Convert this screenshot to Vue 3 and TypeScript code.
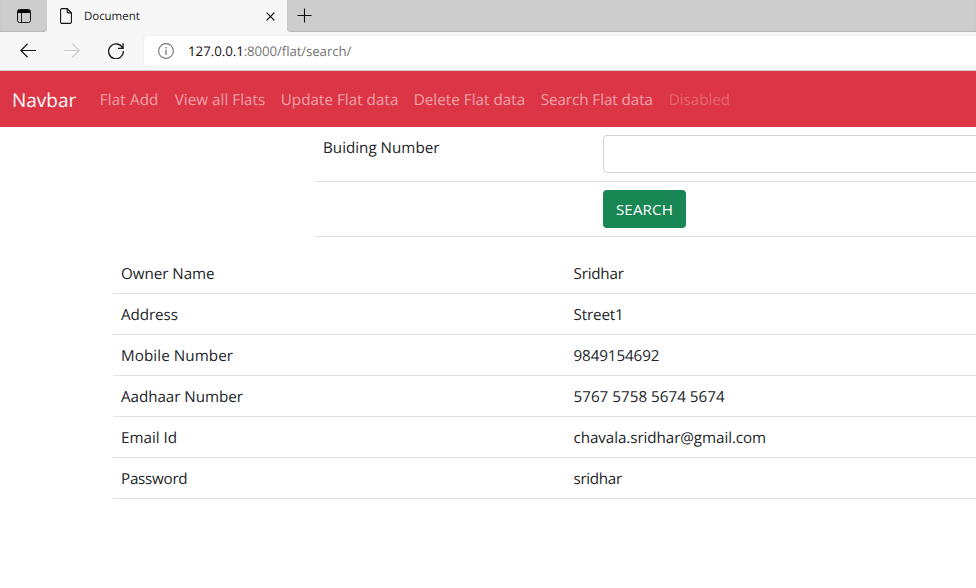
<script setup lang="ts">
interface Label { text: string; tracking: number }
interface Row { label: Label; value: Label }

const links: Label[] = [
  { text: 'Flat Add', tracking: 0.15 },
  { text: 'View all Flats', tracking: 0.05 },
  { text: 'Update Flat data', tracking: 0.04 },
  { text: 'Delete Flat data', tracking: 0.04 },
  { text: 'Search Flat data', tracking: -0.05 },
  { text: 'Disabled', tracking: 0 },
]

const rows: Row[] = [
  { label: { text: 'Owner Name', tracking: -0.05 }, value: { text: 'Sridhar', tracking: -0.2 } },
  { label: { text: 'Address', tracking: -0.08 }, value: { text: 'Street1', tracking: -0.15 } },
  { label: { text: 'Mobile Number', tracking: 0.08 }, value: { text: '9849154692', tracking: -0.1 } },
  { label: { text: 'Aadhaar Number', tracking: -0.05 }, value: { text: '5767 5758 5674 5674', tracking: 0.02 } },
  { label: { text: 'Email Id', tracking: 0 }, value: { text: 'chavala.sridhar@gmail.com', tracking: -0.07 } },
  { label: { text: 'Password', tracking: -0.26 }, value: { text: 'sridhar', tracking: -0.32 } },
]

const spacing = (l: Label) => ({ letterSpacing: `${l.tracking}px` })
</script>

<template>
  <div class="window">
    <div class="tabstrip">
      <div class="strip-left">
        <svg class="tab-actions" width="14" height="14" viewBox="0 0 14 14">
          <rect x=".5" y=".5" width="13" height="13" rx="2" fill="none" stroke="#111" />
          <path d="M1 1h12v3H1z" fill="#000" />
          <path d="M4.5 4v9" stroke="#222" fill="none" />
        </svg>
      </div>
      <div class="tab">
        <svg width="12" height="16" viewBox="0 0 12 16" fill="none" stroke="#111" stroke-width="1.1">
          <path d="M2 .6h5.2l4.2 4.2V14a1.4 1.4 0 0 1-1.4 1.4H2A1.4 1.4 0 0 1 .6 14V2A1.4 1.4 0 0 1 2 .6z" />
          <path d="M7.2.8V4a.9.9 0 0 0 .9.9h3.2" />
        </svg>
        <span class="tab-title">Document</span>
        <svg class="close" width="9" height="9" viewBox="0 0 9 9" stroke="#111" stroke-width="1.3">
          <path d="M.6.6l7.8 7.8M8.4.6L.6 8.4" />
        </svg>
      </div>
      <div class="strip-right">
        <svg width="15" height="15" viewBox="0 0 15 15" stroke="#111" stroke-width="1.1">
          <path d="M7.5.5v14M.5 7.5h14" />
        </svg>
      </div>
    </div>

    <div class="toolbar">
      <div class="controls">
        <svg width="16" height="16" viewBox="0 0 16 16" fill="none" stroke="#1a1a1a" stroke-width="1.2">
          <path d="M16 7.5H.8M7.6.8L.8 7.5l6.8 6.7" />
        </svg>
        <svg width="16" height="16" viewBox="0 0 16 16" fill="none" stroke="#cbcbcb" stroke-width="1.2">
          <path d="M0 7.5h15.2M8.4.8l6.8 6.7-6.8 6.7" />
        </svg>
        <svg width="16" height="16" viewBox="0 0 16 16" fill="none" stroke="#1a1a1a" stroke-width="1.3">
          <path d="M14.6 5A7.4 7.4 0 1 0 15.4 8M15.1.2v5.1H10" />
        </svg>
      </div>
      <div class="address">
        <svg width="16" height="16" viewBox="0 0 16 16" fill="none" stroke="#767676">
          <circle cx="8" cy="8" r="7.4" stroke-width="1.1" />
          <path d="M8 6.8v5M8 4v1.5" stroke-width="1.3" />
        </svg>
        <span class="url"><span class="host">127.0.0.1</span>:8000/flat/search/</span>
      </div>
    </div>

    <nav class="navbar">
      <a class="brand">Navbar</a>
      <div class="links">
        <a v-for="link in links" :key="link.text" class="link" :class="{ disabled: link.text === 'Disabled' }" :style="spacing(link)">{{ link.text }}</a>
      </div>
    </nav>

    <form class="search" @submit.prevent>
      <div class="search-row">
        <label class="caption" for="building">Buiding Number</label>
        <input id="building" class="control" type="text" />
      </div>
      <div class="search-row">
        <span></span>
        <button class="submit" type="submit">SEARCH</button>
      </div>
    </form>

    <div class="details">
      <div v-for="row in rows" :key="row.label.text" class="detail">
        <span :style="spacing(row.label)">{{ row.label.text }}</span>
        <span :style="spacing(row.value)">{{ row.value.text }}</span>
      </div>
    </div>
  </div>
</template>

<style>
body {
  margin: 0;
  background: #fff;
}
</style>

<style scoped>
.window {
  width: 976px;
  height: 588px;
  overflow: hidden;
  background: #fff;
  color: #212529;
  font: 15.2px/24px "Open Sans", "Noto Sans", sans-serif;
  text-rendering: geometricPrecision;
}
.window * {
  box-sizing: border-box;
}
svg {
  display: block;
  flex: none;
}
.tabstrip {
  display: flex;
  height: 32px;
  background: #f7f7f7;
}
.strip-left,
.strip-right {
  background: #cdcdcd;
  box-shadow: inset 0 -1px 1px #bababa;
}
.strip-left {
  width: 47px;
  padding: 9px 0 0 17px;
  border-bottom-right-radius: 4px;
}
.strip-right {
  flex: 1;
  padding: 8px 0 0 10px;
  border-bottom-left-radius: 4px;
}
.tab {
  display: flex;
  width: 240px;
  padding: 8px 12px 0 13px;
  font-size: 11.5px;
  line-height: 16px;
  color: #1b1b1b;
  background: #f7f7f7;
}
.tab-title {
  flex: 1;
  padding: 1px 0 0 12px;
  letter-spacing: -0.05px;
}
.close {
  margin-top: 4px;
}
.toolbar {
  display: flex;
  height: 39px;
  padding-top: 4px;
  background: #f7f7f7;
  border-bottom: 1px solid #cbcbcb;
}
.controls {
  display: flex;
  gap: 28px;
  width: 144px;
  padding: 7px 0 0 20px;
}
.address {
  display: flex;
  flex: 1;
  gap: 14px;
  height: 30px;
  padding: 7px 0 0 14px;
  background: #fff;
  border-radius: 4px 0 0 4px;
  box-shadow: 0 0 3px #e6e6e6;
}
.url {
  font-size: 13.3px;
  line-height: 16px;
  letter-spacing: -0.12px;
  color: #767676;
}
.host {
  color: #111;
  letter-spacing: -0.04px;
}
.navbar {
  display: flex;
  align-items: center;
  height: 56px;
  padding: 2px 0 0 12px;
  background: #dc3545;
}
.brand {
  width: 87.7px;
  font-size: 19px;
  line-height: 30px;
  color: #fff;
}
.links {
  display: grid;
  grid-template-columns: 75px 106px 133px 127px 128px 80px;
}
.link {
  color: rgba(255, 255, 255, 0.55);
  white-space: nowrap;
}
.link.disabled {
  color: rgba(255, 255, 255, 0.25);
}
.search {
  margin: 0 0 16px 315px;
}
.search-row {
  display: grid;
  grid-template-columns: 280px 1fr;
  width: 860px;
  height: 55px;
  padding: 8px;
  border-bottom: 1px solid #dee2e6;
}
.search-row:last-child {
  align-items: start;
}
.caption {
  padding-top: 1px;
}
.control {
  height: 38px;
  padding: 6px 12px;
  font: inherit;
  background: #fff;
  border: 1px solid #ced4da;
  border-radius: 4px;
}
.submit {
  width: 83px;
  height: 38px;
  padding: 0;
  font: inherit;
  letter-spacing: 0.12px;
  color: #fff;
  background: #198754;
  border: 0;
  border-radius: 4px;
}
.details {
  margin-left: 113px;
}
.detail {
  display: grid;
  grid-template-columns: 452.5px 1fr;
  height: 41px;
  padding: 9px 8px 7px;
  border-bottom: 1px solid #dee2e6;
}
</style>
